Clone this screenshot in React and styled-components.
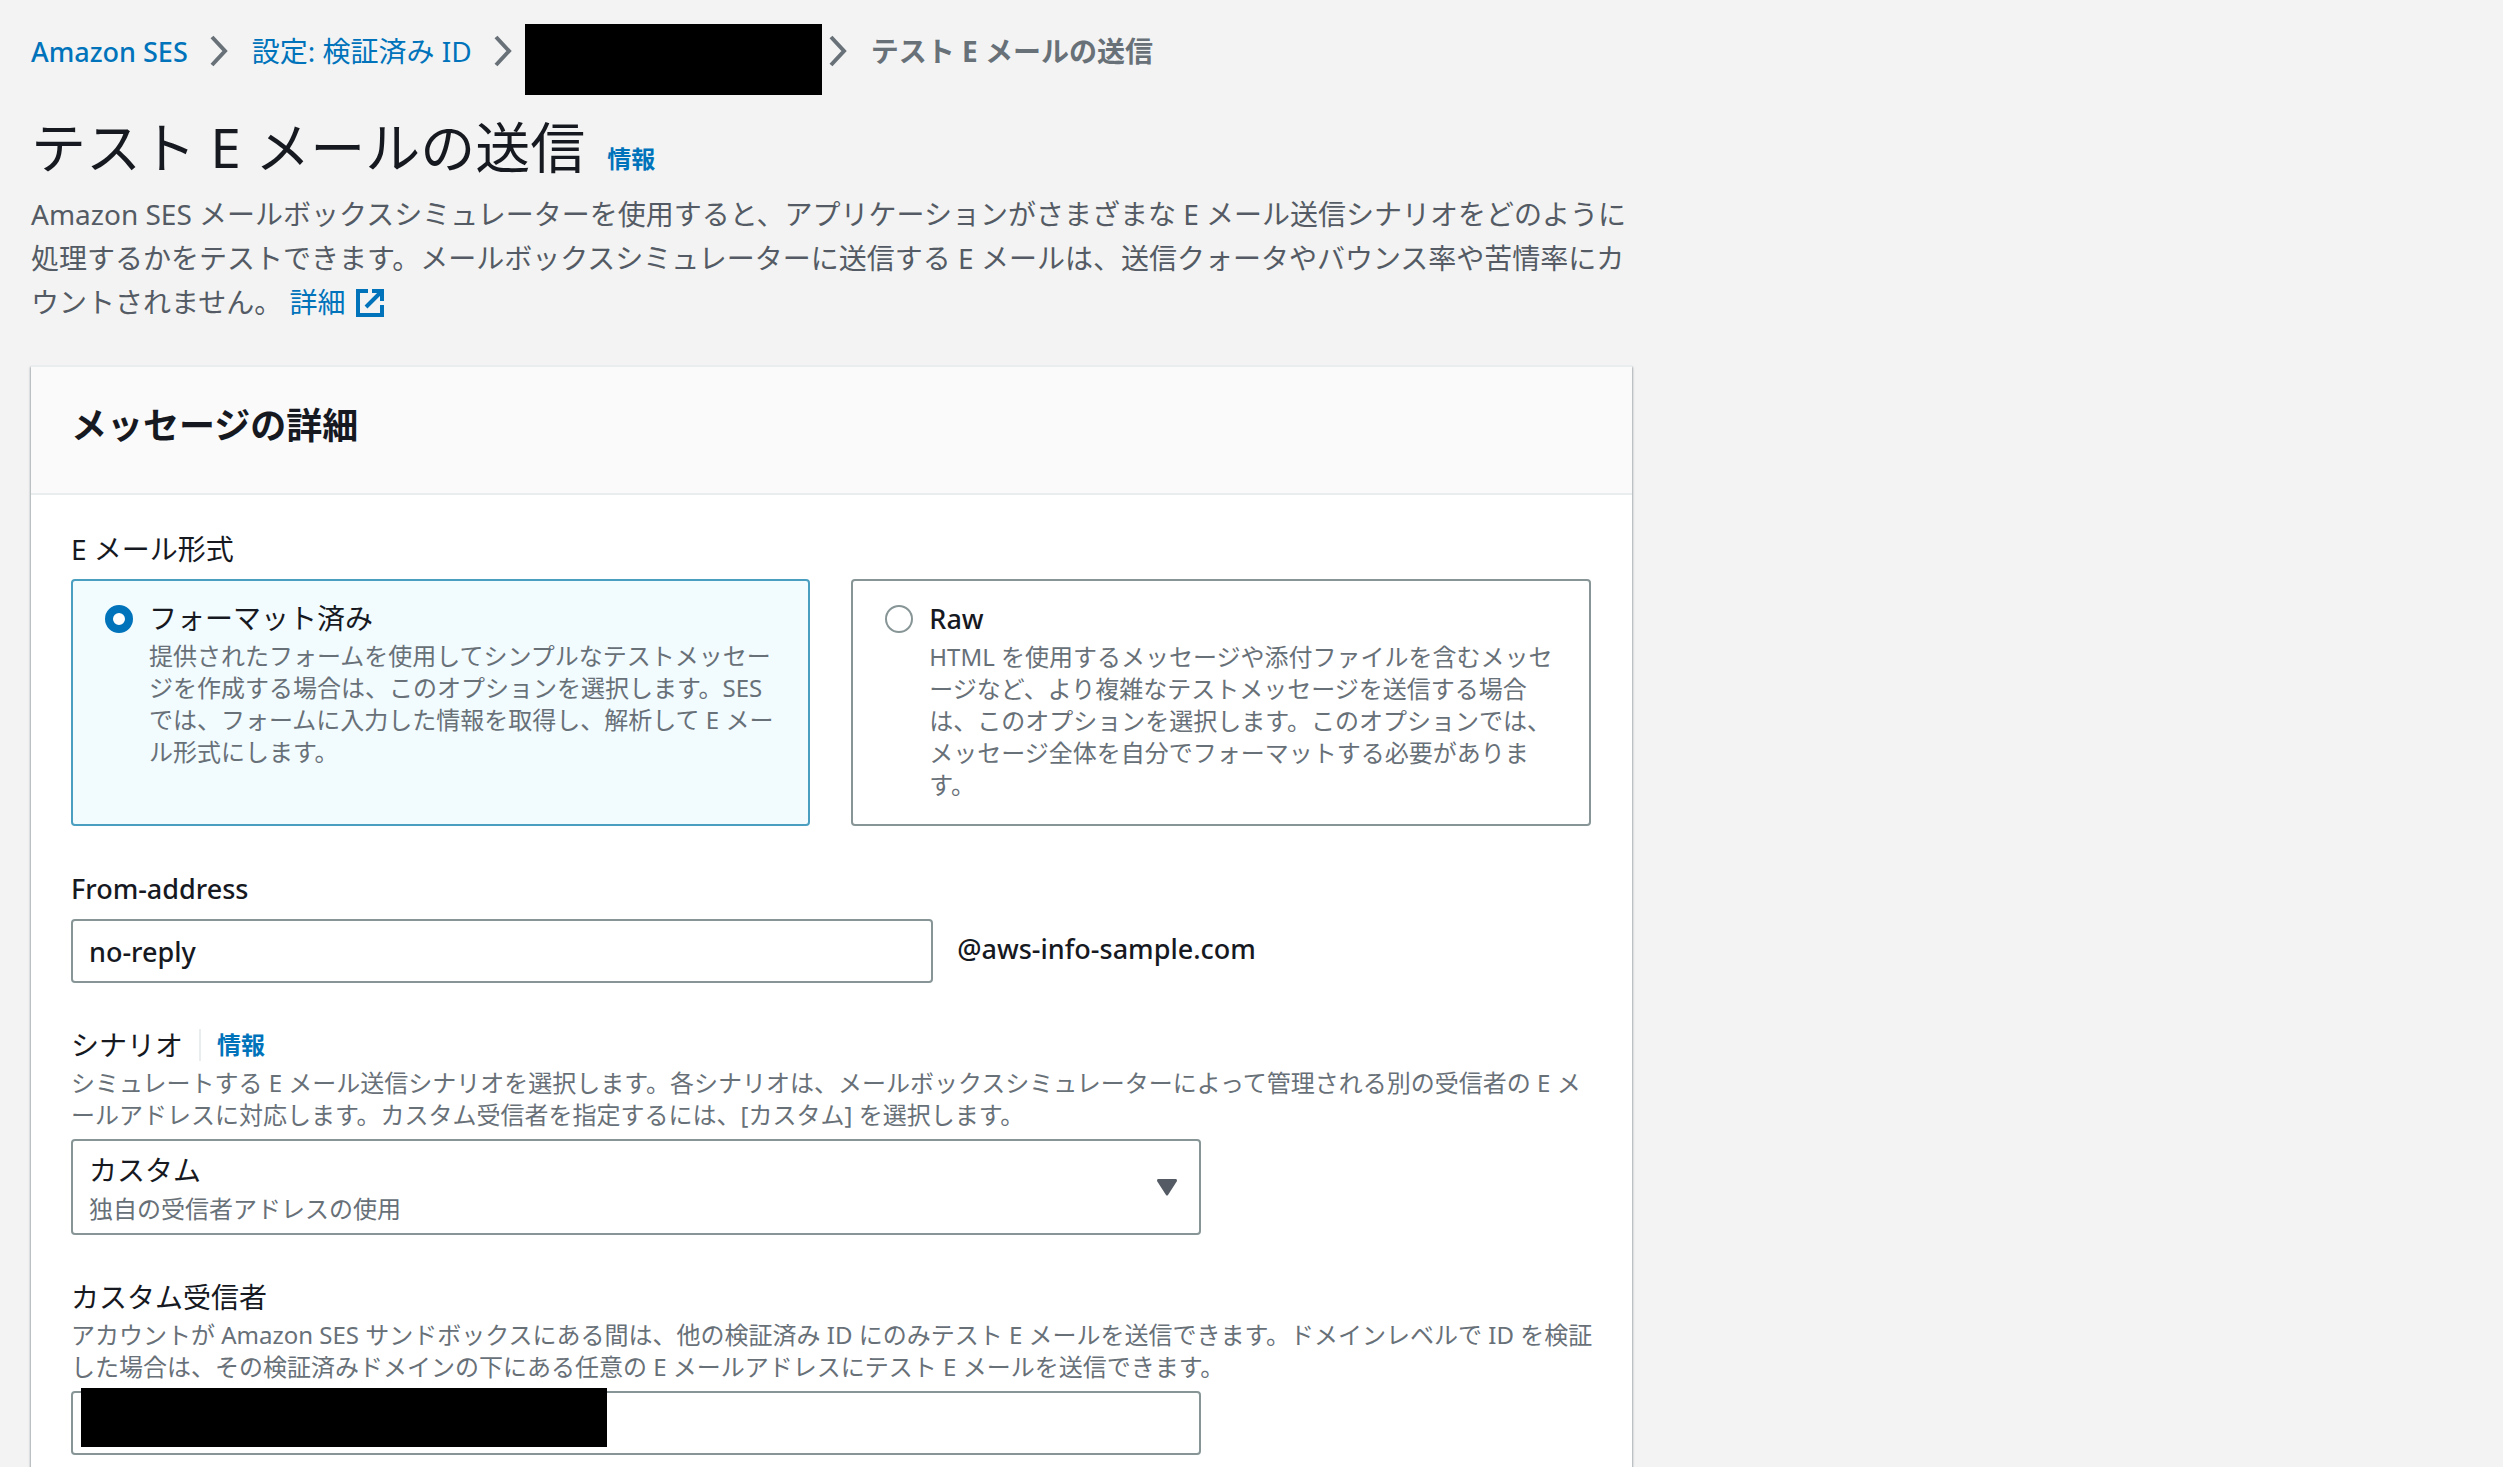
import React, { useState } from "react";
import styled, { createGlobalStyle } from "styled-components";

const GlobalStyle = createGlobalStyle`
  * {
    box-sizing: border-box;
  }

  body {
    margin: 0;
    background: #f3f3f3;
    color: #16191f;
    font-family: "Noto Sans", "Noto Sans CJK JP", sans-serif;
    font-size: 28px;
    font-weight: 400;
  }

  input,
  select {
    font: inherit;
    color: inherit;
  }
`;

const Page = styled.div`
  height: 100vh;
  overflow: hidden;
  padding: 24px 31px 0;
`;

const Main = styled.main`
  width: calc(65% + 14px);
`;

const Breadcrumbs = styled.nav`
  ol {
    display: flex;
    align-items: flex-start;
    margin: 0;
    padding: 0;
    list-style: none;
    line-height: 54px;
    white-space: nowrap;
  }

  li {
    display: flex;
    align-items: flex-start;
  }
`;

const Separator = styled.svg`
  width: 18px;
  height: 54px;
  margin: 0 ${(props) => (props.$tight ? 13 : 24)}px 0
    ${(props) => (props.$close ? 7 : 22)}px;
  fill: none;
  stroke: #687078;
  stroke-width: 4;
`;

const Latin = styled.span`
  font-size: 27px;
  font-weight: 500;
`;

const Link = styled.a`
  color: #0073bb;
  text-decoration: none;

  &:hover {
    text-decoration: underline;
  }
`;

const InfoLink = styled(Link)`
  font-size: 24px;
  font-weight: 700;
  line-height: 32px;
`;

const Current = styled.span`
  color: #687078;
  font-weight: 700;
`;

const Redacted = styled.span`
  display: block;
  width: 297px;
  height: 71px;
  background: #000;
`;

const TitleRow = styled.div`
  display: flex;
  align-items: baseline;
  gap: 22px;
  margin-top: 12px;
  line-height: 80px;
`;

const Title = styled.h1`
  margin: 0;
  font-size: 55px;
  font-weight: 400;
`;

const Description = styled.p`
  margin: 5px 0 41px;
  color: #545b64;
  line-height: 44px;
  white-space: nowrap;
`;

const ExternalIcon = styled.svg`
  width: 28px;
  height: 28px;
  margin-left: 11px;
  vertical-align: -4px;
  fill: none;
  stroke: #0073bb;
  stroke-width: 4;
`;

const Card = styled.section`
  background: #fff;
  border-top: 2px solid #eaeded;
  box-shadow: 0 2px 2px rgba(0, 28, 36, 0.3), 1px 2px 2px rgba(0, 28, 36, 0.2),
    -1px 2px 2px rgba(0, 28, 36, 0.2);
`;

const CardHeader = styled.header`
  padding: 37px 40px 45px;
  background: #fafafa;
  border-bottom: 2px solid #eaeded;
`;

const CardTitle = styled.h2`
  margin: 0;
  font-size: 36px;
  line-height: 44px;
  font-weight: 700;
`;

const CardBody = styled.form`
  display: flex;
  flex-direction: column;
  gap: 44px;
  padding: 36px 41px 45px 40px;
`;

const Field = styled.div`
  min-width: 0;
`;

const LabelRow = styled.div`
  display: flex;
  align-items: center;
  line-height: 36px;
  margin-bottom: ${(props) => (props.$hint ? 4 : 12)}px;
`;

const Divider = styled.span`
  width: 2px;
  height: 32px;
  margin: 0 16px;
  background: #eaeded;
`;

const Hint = styled.p`
  margin: 0 0 8px;
  color: #687078;
  font-size: 24px;
  line-height: 32px;
  white-space: nowrap;
`;

const Tiles = styled.div`
  display: grid;
  grid-template-columns: 1fr 1fr;
  gap: 41px;
`;

const Tile = styled.label`
  display: flex;
  gap: 16px;
  padding: 15px 28px 23px 32px;
  border: 2px solid ${(props) => (props.$checked ? "#4a9fc0" : "#879596")};
  border-radius: 4px;
  background: ${(props) => (props.$checked ? "#f2fbfe" : "#fff")};
`;

const Radio = styled.input`
  appearance: none;
  flex: none;
  width: 28px;
  height: 28px;
  margin: 9px 0 0;
  background: #fff;
  border: 2px solid #879596;
  border-radius: 50%;

  &:checked {
    border: 8px solid #0073bb;
  }
`;

const TileLabel = styled.span`
  display: block;
  line-height: 44px;
`;

const TileText = styled.span`
  display: block;
  color: #687078;
  font-size: 24px;
  line-height: 32px;
  white-space: nowrap;
`;

const AddressRow = styled.div`
  display: flex;
  align-items: center;
  gap: 24px;
`;

const TextInput = styled.input`
  width: ${(props) => props.$width};
  height: 64px;
  padding: 0 16px;
  background: #fff;
  border: 2px solid #879596;
  border-radius: 4px;
  font-size: 27px;
  font-weight: 500;
`;

const Domain = styled(Latin)`
  padding-bottom: 6px;
`;

const SelectBox = styled.div`
  position: relative;
  width: calc(75% - 10px);
`;

const Select = styled.select`
  display: block;
  appearance: none;
  width: 100%;
  height: 96px;
  padding: 0 60px 34px 16px;
  background: #fff;
  border: 2px solid #879596;
  border-radius: 4px;
`;

const SelectHint = styled.span`
  position: absolute;
  left: 18px;
  bottom: 10px;
  color: #687078;
  font-size: 24px;
  line-height: 32px;
  pointer-events: none;
`;

const Caret = styled.svg`
  position: absolute;
  right: 24px;
  top: 40px;
  width: 20px;
  height: 17px;
  fill: #545b64;
  pointer-events: none;
`;

const RedactedField = styled.div`
  position: relative;
`;

const RedactedValue = styled.span`
  position: absolute;
  left: 10px;
  top: -3px;
  width: 526px;
  height: 59px;
  background: #000;
`;

const formats = [
  {
    id: "formatted",
    label: "フォーマット済み",
    lines: [
      "提供されたフォームを使用してシンプルなテストメッセー",
      "ジを作成する場合は、このオプションを選択します。SES",
      "では、フォームに入力した情報を取得し、解析して E メー",
      "ル形式にします。",
    ],
  },
  {
    id: "raw",
    label: <Latin>Raw</Latin>,
    lines: [
      "HTML を使用するメッセージや添付ファイルを含むメッセ",
      "ージなど、より複雑なテストメッセージを送信する場合",
      "は、このオプションを選択します。このオプションでは、",
      "メッセージ全体を自分でフォーマットする必要がありま",
      "す。",
    ],
  },
];

function Lines({ items }) {
  return items.map((line, index) => (
    <React.Fragment key={line}>
      {index > 0 && <br />}
      {line}
    </React.Fragment>
  ));
}

function Chevron(props) {
  return (
    <Separator viewBox="0 0 18 54" aria-hidden="true" {...props}>
      <path d="M2 13 L15 27 L2 41" />
    </Separator>
  );
}

function App() {
  const [format, setFormat] = useState("formatted");

  return (
    <Page>
      <GlobalStyle />
      <Main>
        <Breadcrumbs aria-label="パンくずリスト">
          <ol>
            <li>
              <Link href="#ses">
                <Latin>Amazon SES</Latin>
              </Link>
              <Chevron />
            </li>
            <li>
              <Link href="#identities">設定: 検証済み ID</Link>
              <Chevron $tight />
            </li>
            <li>
              <Redacted />
              <Chevron $close />
            </li>
            <li>
              <Current aria-current="page">テスト E メールの送信</Current>
            </li>
          </ol>
        </Breadcrumbs>

        <TitleRow>
          <Title>テスト E メールの送信</Title>
          <InfoLink href="#info">情報</InfoLink>
        </TitleRow>
        <Description>
          Amazon SES
          メールボックスシミュレーターを使用すると、アプリケーションがさまざまな E
          メール送信シナリオをどのように
          <br />
          処理するかをテストできます。メールボックスシミュレーターに送信する E
          メールは、送信クォータやバウンス率や苦情率にカ
          <br />
          ウントされません。{" "}
          <Link href="#details">
            詳細
            <ExternalIcon viewBox="0 0 28 28" aria-hidden="true">
              <path d="M12 2 H2 V26 H26 V16" />
              <path d="M16 2 H26 V12 M26 2 L10 18" />
            </ExternalIcon>
          </Link>
        </Description>

        <Card>
          <CardHeader>
            <CardTitle>メッセージの詳細</CardTitle>
          </CardHeader>
          <CardBody>
            <Field role="radiogroup" aria-labelledby="format-label">
              <LabelRow id="format-label">E メール形式</LabelRow>
              <Tiles>
                {formats.map((item) => (
                  <Tile key={item.id} $checked={format === item.id}>
                    <Radio
                      type="radio"
                      name="format"
                      value={item.id}
                      checked={format === item.id}
                      onChange={() => setFormat(item.id)}
                    />
                    <span>
                      <TileLabel>{item.label}</TileLabel>
                      <TileText>
                        <Lines items={item.lines} />
                      </TileText>
                    </span>
                  </Tile>
                ))}
              </Tiles>
            </Field>

            <Field>
              <LabelRow>
                <label htmlFor="from">
                  <Latin>From-address</Latin>
                </label>
              </LabelRow>
              <AddressRow>
                <TextInput
                  id="from"
                  type="text"
                  defaultValue="no-reply"
                  $width="calc(57% - 4px)"
                />
                <Domain>@aws-info-sample.com</Domain>
              </AddressRow>
            </Field>

            <Field>
              <LabelRow $hint>
                <label htmlFor="scenario">シナリオ</label>
                <Divider />
                <InfoLink href="#scenario-info">情報</InfoLink>
              </LabelRow>
              <Hint>
                シミュレートする E
                メール送信シナリオを選択します。各シナリオは、メールボックスシミュレーターによって管理される別の受信者の
                E メ
                <br />
                ールアドレスに対応します。カスタム受信者を指定するには、[カスタム]
                を選択します。
              </Hint>
              <SelectBox>
                <Select id="scenario" aria-describedby="scenario-hint">
                  <option>カスタム</option>
                </Select>
                <SelectHint id="scenario-hint">
                  独自の受信者アドレスの使用
                </SelectHint>
                <Caret viewBox="0 0 20 17" aria-hidden="true">
                  <path d="M1 0 H19 Q20 0 20 2 L11 16 Q10 17 9 16 L0 2 Q0 0 1 0 Z" />
                </Caret>
              </SelectBox>
            </Field>

            <Field>
              <LabelRow $hint>
                <label htmlFor="recipient">カスタム受信者</label>
              </LabelRow>
              <Hint>
                アカウントが Amazon SES
                サンドボックスにある間は、他の検証済み ID にのみテスト E
                メールを送信できます。ドメインレベルで ID を検証
                <br />
                した場合は、その検証済みドメインの下にある任意の E
                メールアドレスにテスト E メールを送信できます。
              </Hint>
              <RedactedField>
                <TextInput
                  id="recipient"
                  type="email"
                  $width="calc(75% - 10px)"
                />
                <RedactedValue />
              </RedactedField>
            </Field>
          </CardBody>
        </Card>
      </Main>
    </Page>
  );
}

export default App;
